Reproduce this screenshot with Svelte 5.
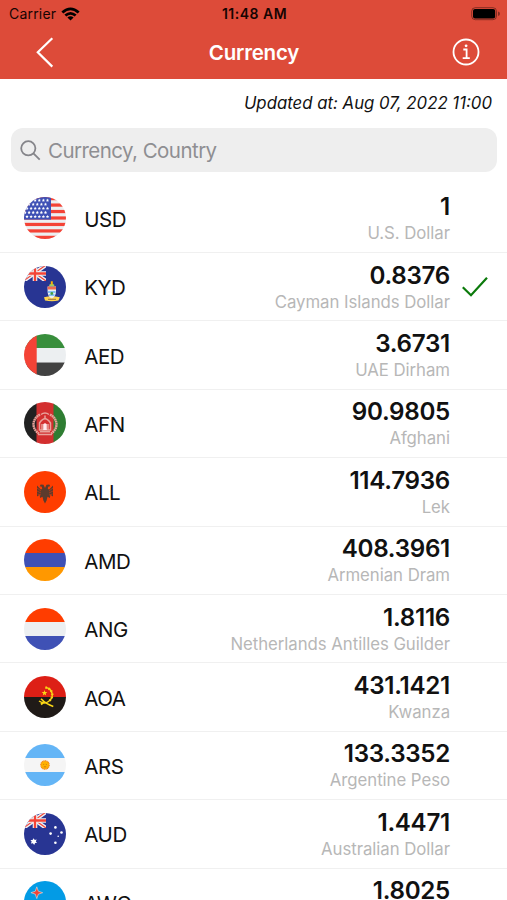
<script lang="ts">
  interface Rate {
    code: string;
    value: string;
    name: string;
  }

  const rates: Rate[] = [
    { code: 'USD', value: '1', name: 'U.S. Dollar' },
    { code: 'KYD', value: '0.8376', name: 'Cayman Islands Dollar' },
    { code: 'AED', value: '3.6731', name: 'UAE Dirham' },
    { code: 'AFN', value: '90.9805', name: 'Afghani' },
    { code: 'ALL', value: '114.7936', name: 'Lek' },
    { code: 'AMD', value: '408.3961', name: 'Armenian Dram' },
    { code: 'ANG', value: '1.8116', name: 'Netherlands Antilles Guilder' },
    { code: 'AOA', value: '431.1421', name: 'Kwanza' },
    { code: 'ARS', value: '133.3352', name: 'Argentine Peso' },
    { code: 'AUD', value: '1.4471', name: 'Australian Dollar' },
    { code: 'AWG', value: '1.8025', name: 'Aruban Florin' }
  ];

  // Flags made only of horizontal bands, top to bottom
  const BANDS: Record<string, string[]> = {
    AMD: ['#ff3d00', '#3f51b5', '#ff9800'],
    ANG: ['#ff3d00', '#eceff1', '#3f51b5'],
    ARS: ['#64b5f6', '#f5f5f5', '#64b5f6']
  };

  const STRIPES = [0, 1, 2, 3, 4, 5, 6];
  const STAR_ROWS = [3.2, 7.2, 11.3, 15.4, 19.5];
  const STAR_COLS = [1, 5.1, 9.2, 13.3, 17.4, 21.5];

  let query = $state('');
  let selected = $state('KYD');

  const visible = $derived(
    rates.filter((r) => (r.code + ' ' + r.name).toLowerCase().includes(query.toLowerCase()))
  );
</script>

{#snippet unionJack()}
  <svg x="0" y="0" width="22" height="15" viewBox="0 0 22 15">
    <path d="M-2 -2L22 15M-2 16L22 -1" stroke="#eceff1" stroke-width="4" />
    <path d="M-2 -2L22 15M-2 16L22 -1" stroke="#f44336" stroke-width="1.2" />
    <path d="M11 0V15M0 7.5H22" stroke="#eceff1" stroke-width="4.6" />
    <path d="M11 0V15M0 7.5H22" stroke="#f44336" stroke-width="2.3" />
  </svg>
{/snippet}

{#snippet flag(code: string)}
  <svg class="flag" viewBox="0 0 42 42" fill="none">
    {#if BANDS[code]}
      {#each BANDS[code] as color, i}
        <rect y={i * 14} width="42" height="14.1" fill={color} />
      {/each}
    {/if}

    {#if code === 'USD'}
      <rect width="42" height="42" fill="#eceff1" />
      {#each STRIPES as i}
        <rect y={i * 6.46} width="42" height="3.23" fill="#f44336" />
      {/each}
      <rect width="27" height="22.6" fill="#3f51b5" />
      {#each STAR_ROWS as y, r}
        {#each STAR_COLS as x}
          <path
            transform="translate({x + (r % 2 ? 0 : 2)} {y})"
            d="M0 -1.6L.5 -.55L1.6 -.4L.8 .4L1 1.5L0 1L-1 1.5L-.8 .4L-1.6 -.4L-.5 -.55Z"
            fill="#fff"
          />
        {/each}
      {/each}
    {:else if code === 'KYD'}
      <rect width="42" height="42" fill="#283593" />
      {@render unionJack()}
      <path d="M20 31.2Q27.7 29.2 35.8 31.2L34.5 34.5Q28 35.8 21 34.5Z" fill="#ffd54f" />
      <path d="M23.6 20.5H32V26Q31.5 31 27.8 32.5Q24 31 23.6 26Z" fill="#eceff1" />
      <path d="M23.6 20.5H32V23.5H23.6Z" fill="#f06a50" />
      <path d="M24 26H31.6M25 29H30.5" stroke="#2196f3" stroke-width="1.2" />
      <circle cx="27.8" cy="27.5" r="1.4" fill="#43a047" />
      <path d="M25.2 18.8Q27.8 16.5 30.3 18.8V20.3H25.2Z" fill="#9ccc65" />
      <path d="M27.8 15.2V18.5" stroke="#ffb300" stroke-width="2" />
      <path d="M24 33.3H32" stroke="#795548" stroke-width=".8" />
    {:else if code === 'AED'}
      <rect width="42" height="14" fill="#388e3c" />
      <rect y="14" width="42" height="14.5" fill="#eceff1" />
      <rect y="28.5" width="42" height="13.5" fill="#424242" />
      <rect width="12.7" height="42" fill="#f44336" />
    {:else if code === 'AFN'}
      <rect width="13" height="42" fill="#212121" />
      <rect x="12.5" width="18" height="42" fill="#d32f2f" />
      <rect x="29.5" width="12.5" height="42" fill="#2e7d32" />
      <g stroke="#e8a29a">
        <path
          d="M16 12.5C7.5 17 7.5 27 15 31.5M26 12.5C34.5 17 34.5 27 27 31.5"
          stroke-width="2.4"
          stroke-dasharray="1.8 .4"
        />
        <path d="M17 12.5Q21 9.5 25 12.5M14 32.4H28M16 29.8H26" stroke-width="1.5" />
        <path d="M15.5 28V21Q21 12.5 26.5 21V28ZM18 28V22M24 28V22" stroke-width="1.5" />
        <path d="M21 13.5V17" stroke-width="1.5" />
      </g>
      <path d="M19.2 28V22.5Q21 20 22.8 22.5V28Z" fill="#ffebee" />
    {:else if code === 'ALL'}
      <rect width="42" height="42" fill="#ff3d00" />
      <path
        d="M21 17L19.5 13.7L16.7 13.4L15.7 15.2L17.8 15.7L18.2 18L16.8 18.5L13 14.5V25.5L15.7 23.8L16 27L18.5 25.7L19.4 29.6L21 32.5L22.6 29.6L23.5 25.7L26 27L26.3 23.8L29 25.5V14.5L25.2 18.5L23.8 18L24.2 15.7L26.3 15.2L25.3 13.4L22.5 13.7Z"
        fill="#5b3b2d"
      />
      <path
        d="M13 17L17 20M13 20L17 22M13.5 23L17 24M29 17L25 20M29 20L25 22M28.5 23L25 24"
        stroke="#ff3d00"
        stroke-width=".5"
      />
    {:else if code === 'AOA'}
      <rect width="42" height="21" fill="#dd1f16" />
      <rect y="21" width="42" height="21" fill="#1f1a17" />
      <g stroke="#f9d616">
        <path d="M21.5 11.5C29 12.5 30.5 21.5 24.5 25.5Q20 28.5 15 25" stroke-width="1.5" />
        <path
          d="M21.5 11.5C29 12.5 30.5 21.5 24.5 25.5"
          stroke-width="2.6"
          stroke-dasharray="1.2 2"
        />
        <path d="M17 22.8Q22 28 29.3 30.5" stroke-width="1.6" />
        <path d="M20 25.8L17 28.6" stroke-width="2" />
      </g>
      <path
        d="M20.5 14L21.2 16L23.3 16.1L21.7 17.4L22.2 19.4L20.5 18.2L18.8 19.4L19.3 17.4L17.7 16.1L19.8 16Z"
        fill="#f9d616"
      />
    {:else if code === 'ARS'}
      <circle cx="21" cy="21" r="4.1" fill="#ffb300" />
      <circle
        cx="21"
        cy="21"
        r="4.2"
        stroke="#f58a17"
        stroke-width="1.2"
        stroke-dasharray="1.2 .4"
      />
      <path d="M19.2 20.4H20.2M21.8 20.4H22.8M19.8 22.8H22.2" stroke="#c76a12" stroke-width=".8" />
    {:else if code === 'AUD'}
      <rect width="42" height="42" fill="#283593" />
      {@render unionJack()}
      <g fill="#fff">
        <path
          transform="translate(0 -.6)"
          d="M9.7 25.8L10.7 27.6L12.7 27.1L11.8 29L13.1 30.4L11.1 30.6L10.2 32.5L8.9 30.9L6.9 31.1L7.7 29.2L6.4 27.7L8.5 27.6Z"
        />
        <circle cx="31.4" cy="14.4" r="1.3" />
        <circle cx="26.6" cy="20.6" r="1.3" />
        <circle cx="37.5" cy="19.5" r="1.3" />
        <circle cx="34.2" cy="23.3" r=".8" />
        <circle cx="31.4" cy="29.7" r="1.3" />
      </g>
    {:else if code === 'AWG'}
      <rect width="42" height="42" fill="#039be5" />
      <rect y="28" width="42" height="1.6" fill="#ffeb3b" />
      <rect y="31.5" width="42" height="1.6" fill="#ffeb3b" />
      <path
        d="M12.8 5.8L14.3 10.2L18.7 11.7L14.3 13.2L12.8 17.6L11.3 13.2L6.9 11.7L11.3 10.2Z"
        fill="#f44336"
        stroke="#cfd8dc"
        stroke-width=".7"
      />
    {/if}
  </svg>
{/snippet}

<div class="screen">
  <header>
    <div class="status-bar">
      <div class="carrier">
        <span>Carrier</span>
        <svg class="wifi" viewBox="0 0 19 14">
          <path d="M.4 4.4Q9.5 -3.6 18.6 4.4L16.7 6.4Q9.5 .2 2.3 6.4Z" />
          <path d="M3.4 7.5Q9.5 2.4 15.6 7.5L13.7 9.4Q9.5 6 5.3 9.4Z" />
          <path d="M6.4 10.5Q9.5 8 12.6 10.5L9.5 13.6Z" />
        </svg>
      </div>
      <span class="clock">11:48 AM</span>
      <svg class="battery" viewBox="0 0 29 14">
        <rect x=".7" y=".7" width="24.8" height="12" rx="3.6" fill="none" stroke="#000" stroke-opacity=".4" />
        <rect x="2" y="2" width="22.2" height="9.4" rx="2" />
        <path d="M27 4.6Q29 5 29 6.8T27 9Z" fill-opacity=".4" />
      </svg>
    </div>
    <div class="nav-bar">
      <button class="back" aria-label="Back">
        <svg viewBox="0 0 18 31"><path d="M16.3 1.2L1.8 15.3L16.3 29.6" /></svg>
      </button>
      <h1>Currency</h1>
      <button class="info" aria-label="Info">
        <svg viewBox="0 0 28 28">
          <circle cx="14" cy="14" r="12.5" />
          <path d="M11.3 11.5H14.6V20M10.7 20.1H17.8" />
          <circle class="dot" cx="14.1" cy="7.8" r="1.4" />
        </svg>
      </button>
    </div>
  </header>

  <p class="updated">Updated at: Aug 07, 2022 11:00</p>

  <label class="search">
    <svg viewBox="0 0 21 21">
      <circle cx="8.3" cy="8.3" r="7.1" />
      <path d="M13.4 13.4L19.7 19.7" />
    </svg>
    <input type="text" placeholder="Currency, Country" bind:value={query} />
  </label>

  <div class="list">
    {#each visible as rate (rate.code)}
      <button class="row" onclick={() => (selected = rate.code)}>
        {@render flag(rate.code)}
        <span class="code">{rate.code}</span>
        <span class="amount">
          <span class="value">{rate.value}</span>
          <span class="name">{rate.name}</span>
        </span>
        <span class="check">
          {#if selected === rate.code}
            <svg viewBox="0 0 28 22"><path d="M1.8 11.2L10 19.2L26 1.8" /></svg>
          {/if}
        </span>
      </button>
    {/each}
  </div>
</div>

<style>
  :global(body) {
    margin: 0;
    overflow: hidden;
  }

  .screen {
    display: flex;
    flex-direction: column;
    width: 507px;
    height: 900px;
    overflow: hidden;
    background: #fff;
    color: #111;
    font-family: Inter, 'Liberation Sans', sans-serif;
  }

  button {
    padding: 0;
    border: none;
    background: none;
    color: inherit;
    font: inherit;
    cursor: pointer;
  }

  svg {
    display: block;
    flex-shrink: 0;
  }

  header {
    flex-shrink: 0;
    height: 79px;
    background: #dd4b39;
  }

  /* Status bar */
  .status-bar {
    display: grid;
    grid-template-columns: 1fr auto 1fr;
    align-items: center;
    height: 27px;
    padding: 0 7px 0 9px;
    color: #160402;
    font-size: 14px;
  }

  .carrier {
    display: flex;
    align-items: center;
    gap: 5px;
    letter-spacing: 0.2px;
  }

  .wifi {
    width: 19px;
    height: 14px;
  }

  .clock {
    font-weight: 600;
    letter-spacing: 0.5px;
  }

  .battery {
    justify-self: end;
    width: 29px;
    height: 14px;
  }

  /* Navigation bar */
  .nav-bar {
    display: grid;
    grid-template-columns: 1fr auto 1fr;
    align-items: center;
    height: 50px;
    padding: 0 27px 0 36px;
    color: #fff;
  }

  h1 {
    margin: 0 8px 0 0;
    font-size: 20.5px;
    font-weight: 600;
    letter-spacing: -0.2px;
  }

  .back svg {
    width: 18px;
    height: 31px;
    fill: none;
    stroke: #fff;
    stroke-width: 2.2;
  }

  .info {
    justify-self: end;
  }

  .info svg {
    width: 28px;
    height: 28px;
    fill: none;
    stroke: #fff;
    stroke-width: 1.8;
  }

  .info .dot {
    fill: #fff;
    stroke: none;
  }

  .updated {
    flex-shrink: 0;
    height: 49px;
    margin: 0;
    padding-right: 15px;
    font-size: 16.8px;
    font-style: italic;
    line-height: 48px;
    text-align: right;
  }

  .search {
    display: flex;
    flex-shrink: 0;
    align-items: center;
    gap: 7px;
    height: 44px;
    margin: 0 10px 12.6px 11px;
    padding-left: 9px;
    border-radius: 12px;
    background: #eee;
  }

  .search svg {
    width: 21px;
    height: 21px;
    fill: none;
    stroke: #85858a;
    stroke-width: 1.8;
  }

  .search input {
    flex: 1;
    min-width: 0;
    padding: 0;
    border: none;
    outline: none;
    background: none;
    color: #111;
    font: 20.5px Inter, 'Liberation Sans', sans-serif;
    letter-spacing: -0.55px;
  }

  .search input::placeholder {
    color: #8e8e92;
    opacity: 1;
  }

  /* Rates */
  .row {
    display: flex;
    align-items: center;
    box-sizing: border-box;
    width: 100%;
    height: 68.4px;
    padding-left: 23.7px;
    border-bottom: 1px solid #f0f0f0;
    text-align: left;
  }

  .flag {
    width: 42px;
    height: 42px;
    border-radius: 50%;
    overflow: hidden;
  }

  .code {
    margin: 2px 0 0 18.5px;
    font-size: 20.5px;
    letter-spacing: -0.4px;
  }

  .amount {
    display: flex;
    flex: 1;
    flex-direction: column;
    align-items: flex-end;
    padding-top: 3px;
  }

  .value {
    font-size: 24.2px;
    font-weight: 600;
    line-height: 28px;
    letter-spacing: -0.3px;
  }

  .name {
    color: #b7b7b7;
    font-size: 16.8px;
    line-height: 25px;
    letter-spacing: -0.05px;
  }

  .check {
    width: 46px;
    margin-left: 11px;
  }

  .check svg {
    width: 28px;
    height: 22px;
    fill: none;
    stroke: #0b7a0b;
    stroke-width: 2.2;
  }
</style>
